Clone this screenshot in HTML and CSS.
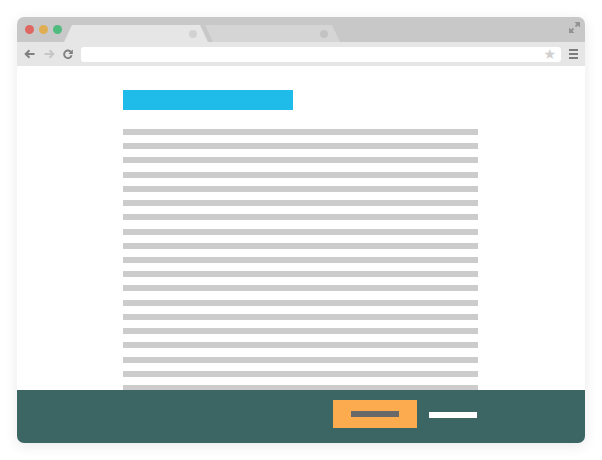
FILE: index.html
```html
<!DOCTYPE html>
<html>
<head>
<meta charset="utf-8">
<link rel="stylesheet" href="styles.css">
</head>
<body>
<div class="window">
  <div class="tabbar">
    <div class="dots">
      <span class="dot red"></span>
      <span class="dot yellow"></span>
      <span class="dot green"></span>
    </div>
    <svg class="tabs" width="280" height="25" viewBox="0 0 280 25">
      <polygon points="151,25 143,8 270,8 278,25" fill="#d5d5d5"/>
      <circle cx="262" cy="17" r="4" fill="#c3c3c3"/>
      <polygon points="2,25 10,8 138,8 146,25" fill="#e6e6e6"/>
      <circle cx="131" cy="17" r="4" fill="#d2d2d2"/>
    </svg>
    <svg class="expand" width="11" height="11" viewBox="0 0 11 11">
      <polygon points="11,0 11,5.5 5.5,0" fill="#939393"/>
      <line x1="9.5" y1="1.5" x2="6.5" y2="4.5" stroke="#939393" stroke-width="2"/>
      <polygon points="0,11 0,5.5 5.5,11" fill="#939393"/>
      <line x1="1.5" y1="9.5" x2="4.5" y2="6.5" stroke="#939393" stroke-width="2"/>
    </svg>
  </div>
  <div class="toolbar">
    <svg class="nav back" width="11" height="10" viewBox="0 0 11 10">
      <path d="M10.5 5H1.8M5.5 1.2L1.6 5l3.9 3.8" fill="none" stroke="#808080" stroke-width="1.9"/>
    </svg>
    <svg class="nav fwd" width="11" height="10" viewBox="0 0 11 10">
      <path d="M0.5 5h8.7M5.5 1.2L9.4 5 5.5 8.8" fill="none" stroke="#c6c6c6" stroke-width="1.9"/>
    </svg>
    <svg class="nav reload" width="10" height="10" viewBox="0 0 10 10">
      <path d="M8.2 3.3A3.8 3.8 0 1 0 8.6 6.3" fill="none" stroke="#808080" stroke-width="1.9"/>
      <polygon points="9.8,0.6 9.8,5 5.4,5" fill="#808080"/>
    </svg>
    <div class="address">
      <span class="star">★</span>
    </div>
    <div class="menu">
      <span></span><span></span><span></span>
    </div>
  </div>
  <div class="content">
    <div class="heading"></div>
    <div class="lines">
      <div class="line"></div><div class="line"></div><div class="line"></div><div class="line"></div>
      <div class="line"></div><div class="line"></div><div class="line"></div><div class="line"></div>
      <div class="line"></div><div class="line"></div><div class="line"></div><div class="line"></div>
      <div class="line"></div><div class="line"></div><div class="line"></div><div class="line"></div>
      <div class="line"></div><div class="line"></div><div class="line"></div><div class="line"></div>
    </div>
  </div>
  <div class="footer">
    <div class="button"><span class="button-label"></span></div>
    <div class="link"></div>
  </div>
</div>
</body>
</html>
```
FILE: styles.css
```css
* { box-sizing: border-box; }
html, body {
  margin: 0;
  padding: 0;
  background: #ffffff;
  font-family: "Liberation Sans", Arial, sans-serif;
}
body { padding: 17px; }

.window {
  width: 568px;
  height: 426px;
  border-radius: 7px;
  overflow: hidden;
  display: flex;
  flex-direction: column;
  background: #ffffff;
  box-shadow: 0 3px 14px rgba(0, 0, 0, 0.09);
}

.tabbar {
  height: 25px;
  flex: none;
  background: #c8c8c8;
  display: flex;
  align-items: center;
}
.dots {
  display: flex;
  gap: 5px;
  padding-left: 8px;
}
.dot {
  width: 9px;
  height: 9px;
  border-radius: 50%;
}
.red { background: #de6762; }
.yellow { background: #e0ae52; }
.green { background: #50bb7f; }
.tabs { display: block; align-self: flex-end; }
.expand {
  display: block;
  margin-left: auto;
  margin-right: 5px;
  align-self: flex-start;
  margin-top: 5px;
}

.toolbar {
  height: 24px;
  flex: none;
  background: #e6e6e6;
  display: flex;
  align-items: center;
  padding-left: 7px;
}
.nav { display: block; flex: none; }
.fwd { margin-left: 9px; }
.reload { margin-left: 8px; }
.address {
  margin-left: 8px;
  width: 480px;
  height: 15px;
  background: #ffffff;
  border-radius: 3px;
  display: flex;
  align-items: center;
  justify-content: flex-end;
  padding-right: 5px;
}
.star {
  color: #d0d0d0;
  font-family: "DejaVu Sans", sans-serif;
  font-size: 14px;
  line-height: 15px;
}
.menu {
  margin-left: 8px;
  width: 9px;
  display: flex;
  flex-direction: column;
  gap: 2px;
}
.menu span {
  display: block;
  height: 2px;
  background: #7c7c7c;
}

.content {
  flex: 1;
  overflow: hidden;
  background: #ffffff;
  padding: 24px 0 0 106px;
}
.heading {
  width: 170px;
  height: 20px;
  background: #1fbbe9;
}
.lines {
  margin-top: 19px;
  display: flex;
  flex-direction: column;
  gap: 8.22px;
}
.line {
  width: 355px;
  height: 6px;
  flex: none;
  background: #cccccc;
}

.footer {
  height: 53px;
  flex: none;
  background: #3c6663;
  display: flex;
  justify-content: flex-end;
  align-items: flex-start;
  padding: 10px 108px 0 0;
  gap: 12px;
}
.button {
  width: 84px;
  height: 28px;
  background: #fdab4f;
  display: flex;
  align-items: center;
  justify-content: center;
}
.button-label {
  display: block;
  width: 48px;
  height: 6px;
  background: #696969;
}
.link {
  margin-top: 12px;
  width: 48px;
  height: 6px;
  background: #ffffff;
}
```
